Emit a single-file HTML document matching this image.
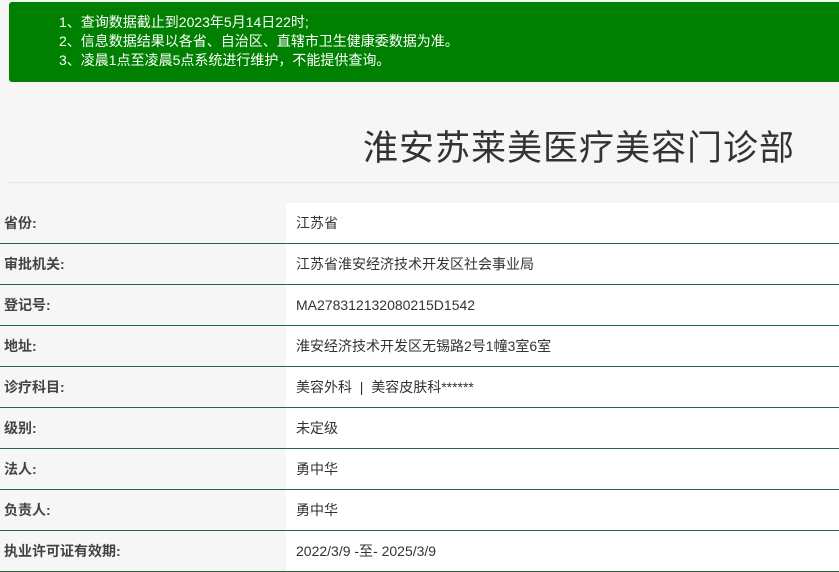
<!DOCTYPE html>
<html><head><meta charset="utf-8"><style>
body{margin:0;background:#f6f6f6;font-family:"Liberation Sans","Noto Sans CJK SC",sans-serif;width:839px;height:571px;overflow:hidden;position:relative}
.notice{position:absolute;left:9px;top:2px;width:835px;height:80px;background:#008000;border-radius:3px;color:#fff;font-size:14px;line-height:19px;box-sizing:border-box;padding:11px 0 0 50px}
.title{position:absolute;right:44px;top:126px;font-size:35px;color:#333;letter-spacing:1px;line-height:46px}
.hr{position:absolute;left:8px;right:0;top:182px;border-top:1px solid #e6e6e6}
table{position:absolute;left:0;top:203px;border-collapse:collapse;width:839px}
td{height:40px;border-bottom:1px solid #1e6b3a;padding:0;font-size:14px}
td.l{width:286px;background:#f6f6f6;color:#444;font-weight:bold;padding-left:4px;box-sizing:border-box}
td.v{background:#fff;color:#333;padding-left:10px}
</style></head><body>
<div class="notice">1、查询数据截止到2023年5月14日22时;<br>2、信息数据结果以各省、自治区、直辖市卫生健康委数据为准。<br>3、凌晨1点至凌晨5点系统进行维护，不能提供查询。</div>
<div class="title">淮安苏莱美医疗美容门诊部</div>
<div class="hr"></div>
<table>
<tr><td class="l">省份:</td><td class="v">江苏省</td></tr>
<tr><td class="l">审批机关:</td><td class="v">江苏省淮安经济技术开发区社会事业局</td></tr>
<tr><td class="l">登记号:</td><td class="v">MA278312132080215D1542</td></tr>
<tr><td class="l">地址:</td><td class="v">淮安经济技术开发区无锡路2号1幢3室6室</td></tr>
<tr><td class="l">诊疗科目:</td><td class="v">美容外科 &nbsp;| &nbsp;美容皮肤科******</td></tr>
<tr><td class="l">级别:</td><td class="v">未定级</td></tr>
<tr><td class="l">法人:</td><td class="v">勇中华</td></tr>
<tr><td class="l">负责人:</td><td class="v">勇中华</td></tr>
<tr><td class="l">执业许可证有效期:</td><td class="v">2022/3/9 -至- 2025/3/9</td></tr>
</table>
</body></html>
